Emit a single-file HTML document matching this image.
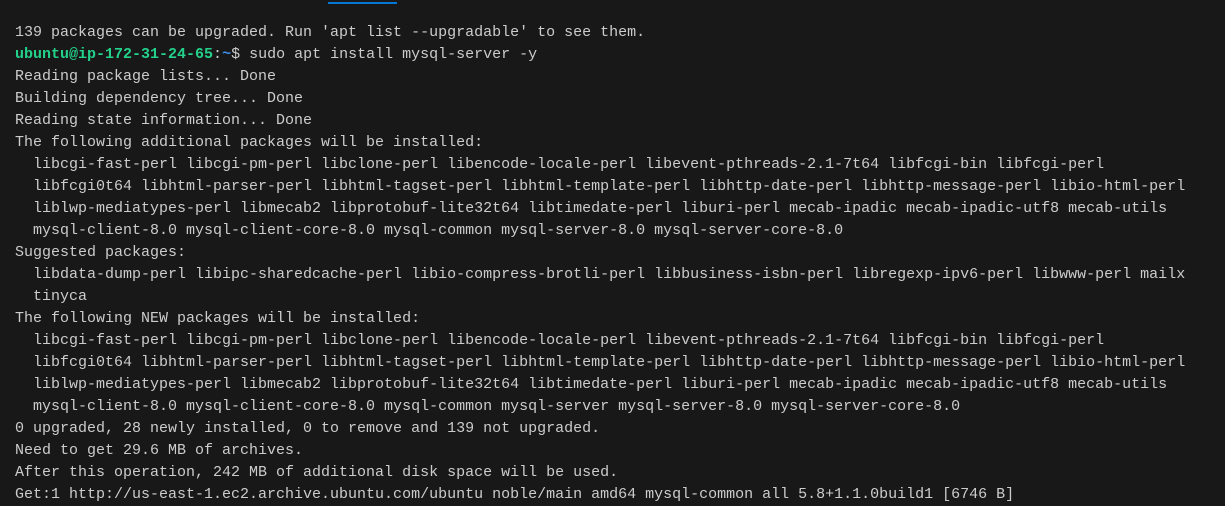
<!DOCTYPE html>
<html><head><meta charset="utf-8"><style>
html,body{margin:0;padding:0;background:#181818;width:1225px;height:504px;overflow:hidden}
.bar{position:absolute;left:328px;top:2px;width:69px;height:2px;background:#0078d4}
pre{position:absolute;left:15px;top:22px;margin:0;font-family:"Liberation Mono",monospace;font-size:15px;line-height:22px;color:#cccccc;white-space:pre}
.g{color:#23d18b;font-weight:bold}
.b{color:#3b8eea;font-weight:bold}
</style></head><body>
<div class="bar"></div>
<pre>139 packages can be upgraded. Run 'apt list --upgradable' to see them.
<span class="g">ubuntu@ip-172-31-24-65</span>:<span class="b">~</span>$ sudo apt install mysql-server -y
Reading package lists... Done
Building dependency tree... Done
Reading state information... Done
The following additional packages will be installed:
  libcgi-fast-perl libcgi-pm-perl libclone-perl libencode-locale-perl libevent-pthreads-2.1-7t64 libfcgi-bin libfcgi-perl
  libfcgi0t64 libhtml-parser-perl libhtml-tagset-perl libhtml-template-perl libhttp-date-perl libhttp-message-perl libio-html-perl
  liblwp-mediatypes-perl libmecab2 libprotobuf-lite32t64 libtimedate-perl liburi-perl mecab-ipadic mecab-ipadic-utf8 mecab-utils
  mysql-client-8.0 mysql-client-core-8.0 mysql-common mysql-server-8.0 mysql-server-core-8.0
Suggested packages:
  libdata-dump-perl libipc-sharedcache-perl libio-compress-brotli-perl libbusiness-isbn-perl libregexp-ipv6-perl libwww-perl mailx
  tinyca
The following NEW packages will be installed:
  libcgi-fast-perl libcgi-pm-perl libclone-perl libencode-locale-perl libevent-pthreads-2.1-7t64 libfcgi-bin libfcgi-perl
  libfcgi0t64 libhtml-parser-perl libhtml-tagset-perl libhtml-template-perl libhttp-date-perl libhttp-message-perl libio-html-perl
  liblwp-mediatypes-perl libmecab2 libprotobuf-lite32t64 libtimedate-perl liburi-perl mecab-ipadic mecab-ipadic-utf8 mecab-utils
  mysql-client-8.0 mysql-client-core-8.0 mysql-common mysql-server mysql-server-8.0 mysql-server-core-8.0
0 upgraded, 28 newly installed, 0 to remove and 139 not upgraded.
Need to get 29.6 MB of archives.
After this operation, 242 MB of additional disk space will be used.
Get:1 http://us-east-1.ec2.archive.ubuntu.com/ubuntu noble/main amd64 mysql-common all 5.8+1.1.0build1 [6746 B]</pre>
</body></html>
